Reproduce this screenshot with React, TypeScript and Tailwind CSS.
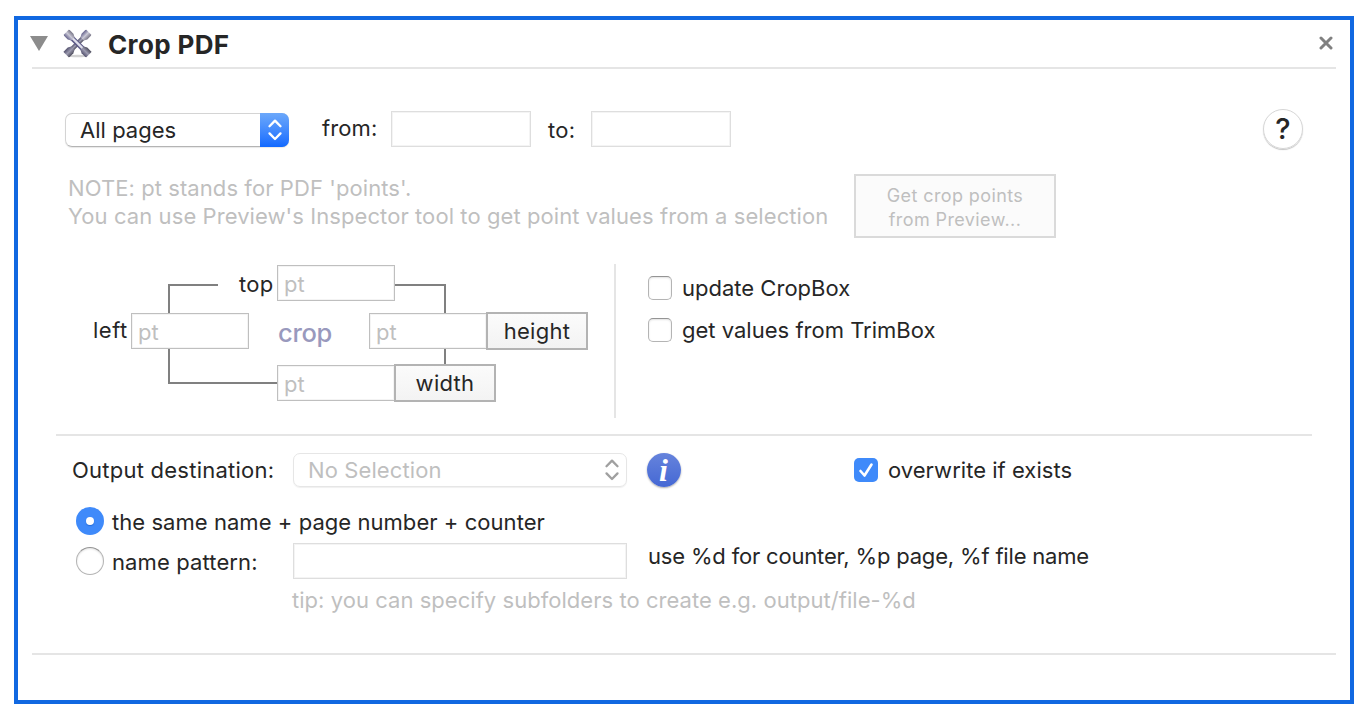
import type { ReactNode } from "react";

function Chevrons({ className }: { className: string }) {
  return (
    <svg className={className} width="16" height="24" viewBox="0 0 16 24" fill="none" stroke="currentColor" strokeWidth="2.3" strokeLinecap="round" strokeLinejoin="round">
      <path d="M2.500 8.200 8 2.600l5.500 5.600M2.500 15.400 8 21l5.500-5.600" />
    </svg>
  );
}

function WrenchIcon() {
  return (
    <svg width="30" height="30" viewBox="0 0 30 30" fill="none">
      <defs>
        <linearGradient id="steel" x1="0" y1="0" x2="1" y2="0">
          <stop offset="0" stopColor="#66648c" />
          <stop offset="0.5" stopColor="#c9c8d6" />
          <stop offset="1" stopColor="#777586" />
        </linearGradient>
        <linearGradient id="steelDark" x1="0" y1="0" x2="1" y2="0">
          <stop offset="0" stopColor="#55536f" />
          <stop offset="0.5" stopColor="#9c9bb0" />
          <stop offset="1" stopColor="#4d4c5c" />
        </linearGradient>
      </defs>
      <ellipse cx="15.500" cy="27" rx="9.500" ry="1.300" fill="#d2d2d2" />
      <g transform="rotate(45 15.500 14.500)">
        <rect x="13.200" y="2" width="4.600" height="25" fill="url(#steelDark)" />
        <path d="M12-1.500h7l.5 1v5.200l-1.700 3.300h-4.600l-1.700-3.300v-5.200z" fill="url(#steel)" />
        <path d="M12 30.500h7l.5-1v-5.200l-1.700-3.300h-4.600l-1.700 3.300v5.200z" fill="url(#steelDark)" />
      </g>
      <g transform="rotate(-45 15.500 14.500)">
        <rect x="13" y="2" width="5" height="25" fill="#5d5b88" />
        <rect x="14.500" y="2" width="2.400" height="25" fill="#e0e0ec" />
        <path d="M12-1.500h7l.5 1v5.200l-1.700 3.300h-4.600l-1.700-3.300v-5.200z" fill="url(#steel)" />
        <path d="M12 30.500h7l.5-1v-5.200l-1.700-3.300h-4.600l-1.700 3.300v5.200z" fill="url(#steelDark)" />
      </g>
    </svg>
  );
}

function Field({ className, children }: { className: string; children?: ReactNode }) {
  return (
    <div className={`flex h-9 shrink-0 items-center border bg-white text-[#bfbfbf] shadow-[inset_0_0_0_1px_#f4f4f4] ${className}`}>
      {children}
    </div>
  );
}

function Checkbox({ className }: { className: string }) {
  return (
    <div className={`flex shrink-0 rounded-[5px] border border-[#b4b4b4] border-t-[#949494] bg-white shadow-[inset_0_1px_2px_#e2e2e2] ${className}`} />
  );
}

function CropDiagram() {
  return (
    <div className="relative h-[154px] w-[558px] shrink-0 border-r-2 border-[#e5e5e5]">
      <svg className="absolute left-0 top-0" width="556" height="154" fill="none" stroke="#808080" strokeWidth="2">
        <path d="M160 21h-49v98h110M336 21h51v90" />
      </svg>
      <span className="absolute left-[181px] top-[6px] tracking-[0.3px]">top</span>
      <span className="absolute left-[35px] top-[52px] tracking-[0.5px]">left</span>
      <Field className="absolute left-[219px] top-px w-[118px] border-[#bfbfbf] pl-1.5 pt-0.5">pt</Field>
      <Field className="absolute left-[73px] top-[49px] w-[118px] border-[#bfbfbf] pl-1.5 pt-0.5">pt</Field>
      <Field className="absolute left-[311px] top-[49px] w-[118px] border-[#bfbfbf] pl-1.5 pt-0.5">pt</Field>
      <Field className="absolute left-[219px] top-[101px] w-[118px] border-[#bfbfbf] pl-1.5 pt-0.5">pt</Field>
      <span className="absolute left-[220px] top-[55px] text-[25.500px] font-medium tracking-[-0.3px] text-[#9999bd]">crop</span>
      <div className="absolute left-[428px] top-[48px] flex h-[38px] w-[102px] items-center justify-center border-2 border-[#b3b3b3] bg-linear-to-b from-[#fbfbfb] to-[#f3f3f3] tracking-[0.3px]">height</div>
      <div className="absolute left-[336px] top-[100px] flex h-[38px] w-[102px] items-center justify-center border-2 border-[#b3b3b3] bg-linear-to-b from-[#fbfbfb] to-[#f3f3f3] tracking-[0.3px]">width</div>
    </div>
  );
}

export default function App() {
  return (
    <div className="h-[718px] w-[1368px] bg-white pl-3.5 pt-4 font-['Inter',sans-serif] text-[22px] leading-7 text-[#262626]">
      <main className="h-[688px] w-[1340px] overflow-hidden whitespace-nowrap border-4 border-[#1168e1]">
        <header className="mx-3.5 flex h-[49px] items-center border-b-2 border-[#e5e5e5]">
          <svg className="-ml-0.5 shrink-0" width="18" height="15" viewBox="0 0 18 15">
            <path d="M0 0h18L9 15z" fill="#8c8c8c" />
          </svg>
          <div className="ml-[14px]"><WrenchIcon /></div>
          <h1 className="ml-[16px] mt-[3px] text-[26px] font-bold tracking-[0.35px]">Crop PDF</h1>
          <svg className="mb-px ml-auto mr-[3px]" width="14" height="14" viewBox="0 0 14 14" stroke="#808080" strokeWidth="3" strokeLinecap="round">
            <path d="m2 2 10 10M12 2 2 12" />
          </svg>
        </header>

        <section className="flex h-[105px] pl-[47px] pt-10">
          <div className="mt-1 flex h-[34px] w-[224px] shrink-0 items-center rounded-[7px] border border-[#d4d4d4] border-b-[#b4b4b4] pl-3.5 shadow-[0_1px_1px_#e8e8e8]">
            <span className="tracking-[0.03px]">All pages</span>
            <div className="-mr-px ml-auto flex h-[34px] w-[29px] items-center justify-center rounded-r-[7px] bg-linear-to-b from-[#6ca8fa] to-[#1069ff]">
              <Chevrons className="text-white" />
            </div>
          </div>
          <span className="ml-[33px] mt-[5px] w-[69px] tracking-[0.1px]">from:</span>
          <Field className="mt-[2px] w-[140px] border-[#dedede]" />
          <span className="ml-[17px] mt-[7px] w-[43px] tracking-[0.3px]">to:</span>
          <Field className="mt-[2px] w-[140px] border-[#dedede]" />
          <div className="ml-[532px] flex size-10 items-center justify-center rounded-full border border-[#d6d6d6] shadow-[0_1px_1px_#c4c4c4]">
            <span className="text-[29px] font-medium">?</span>
          </div>
        </section>

        <section className="flex h-[90px] pl-[50px]">
          <p className="w-[786px] shrink-0 text-[#bfbfbf] tracking-[0.08px]">
            NOTE: pt stands for PDF 'points'.<br />
            You can use Preview's Inspector tool to get point values from a selection
          </p>
          <div className="flex h-16 w-[202px] shrink-0 items-center justify-center border-2 border-[#dadada] bg-[#fbfbfb] pt-1 text-center text-[18px] leading-6 tracking-[0.4px] text-[#bfbfbf]">
            Get crop points<br />from Preview...
          </div>
        </section>

        <section className="flex h-[170px] pl-10">
          <CropDiagram />
          <div className="ml-8 flex flex-col gap-3.5 pt-2.5 tracking-[0.01px]">
            <div className="flex h-7 items-center gap-2.5"><Checkbox className="size-6" />update CropBox</div>
            <div className="flex h-7 items-center gap-2.5"><Checkbox className="size-6" />get values from TrimBox</div>
          </div>
        </section>

        <section className="mx-[38px] h-[219px] border-t-2 border-[#e5e5e5] pt-[17px]">
          <div className="flex h-[34px] items-center pl-4">
            <span className="w-[221px] shrink-0 tracking-[0.24px]">Output destination:</span>
            <div className="flex h-[34px] w-[334px] items-center justify-between rounded-[7px] border border-[#e6e6e6] pl-3.5 pr-1.5 text-[#bfbfbf] shadow-[0_1px_1px_#f0f0f0]">
              <span className="tracking-[0.1px]">No Selection</span>
              <Chevrons className="text-[#a0a0a0]" />
            </div>
            <div className="ml-5 flex size-[34px] items-center justify-center rounded-full bg-linear-to-b from-[#6683dc] to-[#4568d4] shadow-[0_1px_2px_#aaa]">
              <span className="mr-px font-['Liberation_Serif',serif] text-[32px] font-bold italic text-white">i</span>
            </div>
            <div className="ml-[173px] flex size-6 items-center justify-center rounded-[5px] bg-[#3f8afa]">
              <svg width="24" height="24" viewBox="0 0 24 24" fill="none" stroke="white" strokeWidth="2.600" strokeLinecap="round" strokeLinejoin="round"><path d="m6.500 13 4 4.500L17.500 6.500" /></svg>
            </div>
            <span className="ml-2.5 tracking-[0.03px]">overwrite if exists</span>
          </div>
          <div className="mt-5 flex h-7 items-center pl-5">
            <div className="flex size-7 items-center justify-center rounded-full bg-[#3f8afa]"><div className="size-2 rounded-full bg-white shadow-[0_1px_1px_#236bd6]" /></div>
            <span className="ml-2 mt-[2px] tracking-[0.05px]">the same name + page number + counter</span>
          </div>
          <div className="mt-2 flex h-9 pl-5">
            <div className="mt-1 size-7 shrink-0 rounded-full border border-[#b4b4b4] border-t-[#949494] shadow-[inset_0_1px_2px_#e2e2e2]" />
            <span className="ml-2 mt-[5px] w-[181px] shrink-0 tracking-[0.12px]">name pattern:</span>
            <Field className="w-[334px] border-[#dedede]" />
            <span className="ml-[21px] mt-[-1px] tracking-[-0.18px]">use %d for counter, %p page, %f file name</span>
          </div>
          <p className="ml-[236px] mt-[7px] tracking-[0.04px] text-[#bfbfbf]">tip: you can specify subfolders to create e.g. output/file-%d</p>
        </section>
        <div className="mx-3.5 border-t-2 border-[#e5e5e5]" />
      </main>
    </div>
  );
}
